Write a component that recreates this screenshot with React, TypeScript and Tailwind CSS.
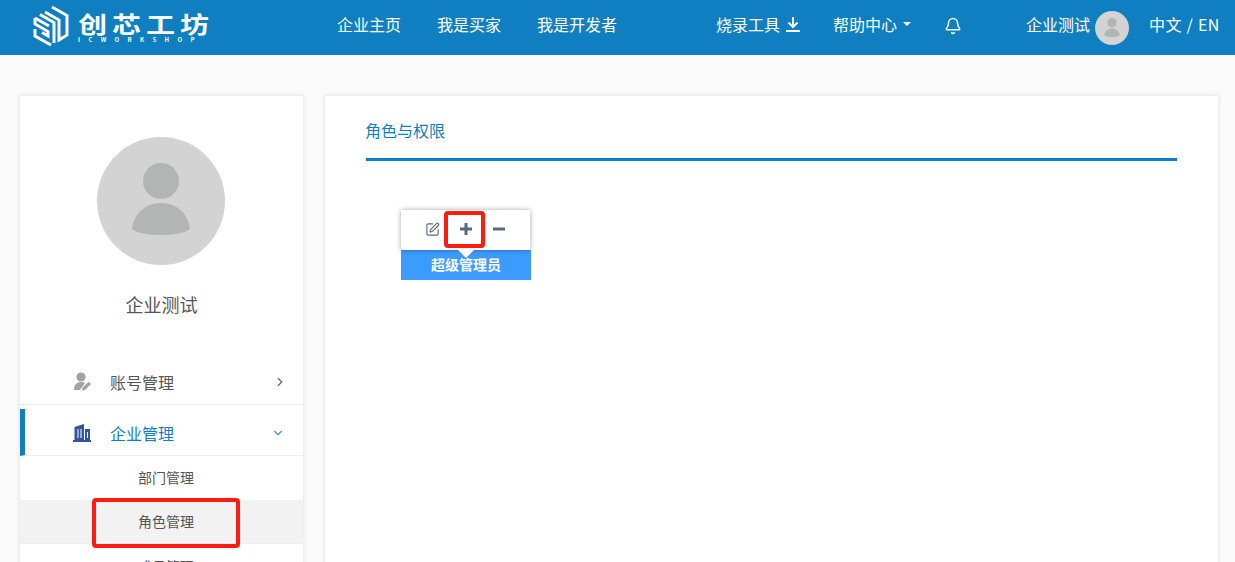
import { Bell, ChevronDown, ChevronRight, SquarePen } from 'lucide-react'

const cjk = { fontFamily: '"Noto Sans CJK SC", "Noto Sans", sans-serif' }

function LogoMark() {
  return (
    <svg width="37" height="42" viewBox="0 0 37 42" fill="none" stroke="#fff" strokeWidth="3" className="mb-[3px] shrink-0">
      <path d="M19 2 L34 10.5 V30 L26 35 V15 L12 7" />
      <path d="M7 9.5 L21 17.5 V38" />
      <path d="M2 13 V19 L15 26.5 V31 L9 27.5" />
      <path d="M2 13 L16 21" />
      <path d="M2 24 V31 L18 40" />
    </svg>
  )
}

function PersonAvatar({ size }: { size: number }) {
  return (
    <svg width={size} height={size} viewBox="0 0 128 128" className="block">
      <circle cx="64" cy="64" r="64" fill="#d3d3d3" />
      <circle cx="64" cy="44" r="18" fill="#b3b5b4" />
      <path d="M35 92 C37 75 50 66 64 66 C78 66 91 75 93 92 C84 100 44 100 35 92 Z" fill="#b3b5b4" />
    </svg>
  )
}

function DownloadGlyph() {
  return (
    <svg width="16" height="16" viewBox="0 0 16 16" fill="none" stroke="#fff" strokeWidth="2">
      <path d="M8 1 V10 M3.5 6.5 L8 11 L12.5 6.5" />
      <path d="M1 15 H15" />
    </svg>
  )
}

function AccountGlyph() {
  return (
    <svg width="20" height="20" viewBox="0 0 20 20" fill="#a3a3a3">
      <circle cx="8" cy="5" r="4.6" />
      <path d="M1 18 C1 12.5 4 10 8 10 C9.5 10 11 10.5 12 11.2 L7.5 17 L7 18 Z" />
      <path d="M9 18.5 L9.6 15.6 L15.6 9.8 L18 12 L12 18 Z" />
    </svg>
  )
}

function CompanyGlyph() {
  return (
    <svg width="18" height="18" viewBox="0 0 18 18" fill="#2f55a0">
      <path d="M1.5 3 L11 0 V16 H1.5 Z M12 5 H17 V16 H12 Z M0 16 H18 V18 H0 Z" />
      <path d="M4.5 5 H5.5 V14 H4.5 Z M7.5 5 H8.5 V14 H7.5 Z M14 8 H15 V14 H14 Z" fill="#fff" />
    </svg>
  )
}

export default function App() {
  return (
    <div className="relative h-[562px] overflow-hidden bg-[#fafafa]" style={cjk}>
      <header className="flex h-[55px] items-center bg-[#0f7fc1] text-base text-white">
        <div className="ml-[33px] flex w-[304px] items-center">
          <LogoMark />
          <div className="ml-2 flex flex-col items-start">
            <span className="h-[25px] origin-top scale-y-[0.8] text-[29px] leading-[26px] font-bold tracking-[5px] whitespace-nowrap">创芯工坊</span>
            <span className="text-[6px] leading-[6px] font-bold tracking-[8.4px] whitespace-nowrap">ICWORKSHOP</span>
          </div>
        </div>
        <nav className="mb-2 flex gap-9">
          <span>企业主页</span>
          <span>我是买家</span>
          <span>我是开发者</span>
        </nav>
        <div className="mb-2 ml-[99px] flex items-center gap-[5px]">
          <span>烧录工具</span>
          <DownloadGlyph />
        </div>
        <div className="mb-2 ml-8 flex items-center gap-1.5">
          <span>帮助中心</span>
          <span className="h-0 w-0 border-x-4 border-t-4 border-x-transparent border-t-white" />
        </div>
        <Bell size={18} strokeWidth={2} className="mb-1 ml-[33px] mr-[-1px]" />
        <div className="ml-[65px] flex items-center gap-[5px]">
          <span className="mb-2">企业测试</span>
          <PersonAvatar size={34} />
        </div>
        <span className="mb-2 ml-5 tracking-[0.3px] whitespace-nowrap [word-spacing:1px]">中文 / EN</span>
      </header>

      <div className="flex gap-5 pt-10 pl-[19px]">
        <aside className="h-[520px] w-[285px] shrink-0 border border-[#eeeeee] bg-white shadow-[0_0_4px_rgba(0,0,0,0.08)]">
          <div className="mt-[41px] flex justify-center pr-px">
            <PersonAvatar size={128} />
          </div>
          <p className="mt-[26px] text-center text-lg leading-[26px] text-[#555]">企业测试</p>

          <div className="mt-[44px] flex h-[44px] items-center border-b border-[#eeeeee] pr-4 pb-px pl-[53px] text-base text-[#555]">
            <AccountGlyph />
            <span className="ml-[17px] flex-1">账号管理</span>
            <ChevronRight size={14} className="text-[#666]" />
          </div>
          <div className="mt-1 flex h-[47px] items-center border-b border-[#eeeeee] border-l-[5px] border-l-[#0f7fc1] pt-[2px] pr-[18px] pl-[48px] text-base text-[#0f7fc1]">
            <CompanyGlyph />
            <span className="ml-[19px] flex-1">企业管理</span>
            <ChevronDown size={14} className="text-[#4a90d0]" />
          </div>
          <div className="flex h-11 items-center pb-[2px] pl-[118px] text-sm text-[#555]">部门管理</div>
          <div className="flex h-11 items-center border-b border-[#eeeeee] bg-[#f2f2f2] pb-[2px] pl-[118px] text-sm text-[#555]">角色管理</div>
          <div className="flex h-11 items-center pl-[118px] text-sm text-[#555]">成员管理</div>
        </aside>

        <main className="h-[520px] w-[895px] shrink-0 border border-[#eeeeee] bg-white px-[41px] shadow-[0_0_4px_rgba(0,0,0,0.08)]">
          <h1 className="mt-[23px] -ml-px text-base leading-[22px] text-[#0f7fc1]">角色与权限</h1>
          <div className="mt-[17px] h-[3px] w-[811px] bg-[#0a7fd0]" />
          <div className="mt-[49px] ml-[35px] w-[130px]">
            <div className="relative z-10 flex h-10 w-[129px] items-center bg-white pb-[2px] text-[#546a85] shadow-[0_0_5px_rgba(0,0,0,0.35)]">
              <SquarePen size={15} strokeWidth={1.8} className="ml-[24px]" />
              <svg width="12" height="12" viewBox="0 0 12 12" stroke="currentColor" strokeWidth="3" className="ml-5">
                <path d="M0 6 H12 M6 0 V12" />
              </svg>
              <svg width="12" height="12" viewBox="0 0 12 12" stroke="currentColor" strokeWidth="3" className="ml-[21px]">
                <path d="M0 6 H12" />
              </svg>
              <span className="absolute top-full left-[57px] h-0 w-0 border-x-8 border-t-8 border-x-transparent border-t-white" />
            </div>
            <div className="flex h-[30px] items-center justify-center bg-[#3c9bff] pb-[2px] text-sm font-bold text-white">超级管理员</div>
          </div>
        </main>
      </div>

      {/* annotation boxes painted on the screenshot */}
      <div className="absolute top-[211px] left-[444px] z-20 h-[37px] w-[41px] rounded-sm border-4 border-[#fb1c12]" />
      <div className="absolute top-[498px] left-[92px] z-20 h-[50px] w-[148px] rounded-sm border-4 border-[#fb1c12]" />
    </div>
  )
}
